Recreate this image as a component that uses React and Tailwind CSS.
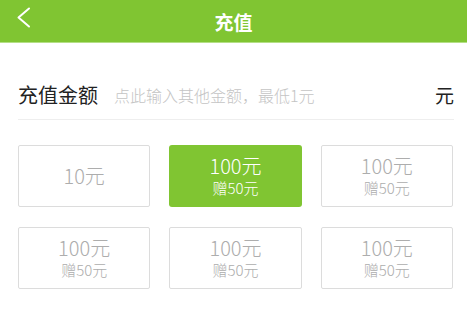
import React from "react";

const font = { fontFamily: '"Noto Sans CJK SC", "Noto Sans", sans-serif' };

function Box({ amount, bonus, active }) {
  return (
    <div
      className={
        "h-[62px] flex flex-col items-center justify-center font-light " +
        (active
          ? "bg-[#80c532] rounded-[3px] text-white"
          : "border border-[#dcdcdc] rounded-[2px] text-[#adadad]")
      }
    >
      <div className="text-[20px] leading-[24px]">{amount}</div>
      {bonus && <div className="text-[15px] leading-[20px]">{bonus}</div>}
    </div>
  );
}

export default function App() {
  return (
    <div className="w-[467px] h-[310px] bg-white overflow-hidden" style={font}>
      <div className="relative h-[42px] bg-[#80c532] flex items-center justify-center border-b border-[#b4df86] box-content">
        <svg className="absolute left-[16px] top-[7px]" width="16" height="21" viewBox="0 0 16 21">
          <polyline points="13,1.5 2.5,10.5 13,19.5" fill="none" stroke="white" strokeWidth="2" strokeLinecap="round" strokeLinejoin="round" />
        </svg>
        <span className="text-white text-[19px] font-bold leading-none">充值</span>
      </div>
      <div className="mt-[27px] ml-[18px] mr-[13px] h-[50px] flex items-center border-b border-[#eeeeee]">
        <span className="text-[20px] text-[#222] leading-none">充值金额</span>
        <span className="ml-[16px] text-[16px] text-[#c4c4c4] leading-none font-light">点此输入其他金额，最低1元</span>
        <span className="ml-auto text-[19px] text-[#222] leading-none">元</span>
      </div>
      <div className="mt-[25px] ml-[18px] w-[435px] grid grid-cols-3 gap-x-[19px] gap-y-[20px]">
        <Box amount="10元" />
        <Box amount="100元" bonus="赠50元" active />
        <Box amount="100元" bonus="赠50元" />
        <Box amount="100元" bonus="赠50元" />
        <Box amount="100元" bonus="赠50元" />
        <Box amount="100元" bonus="赠50元" />
      </div>
    </div>
  );
}
